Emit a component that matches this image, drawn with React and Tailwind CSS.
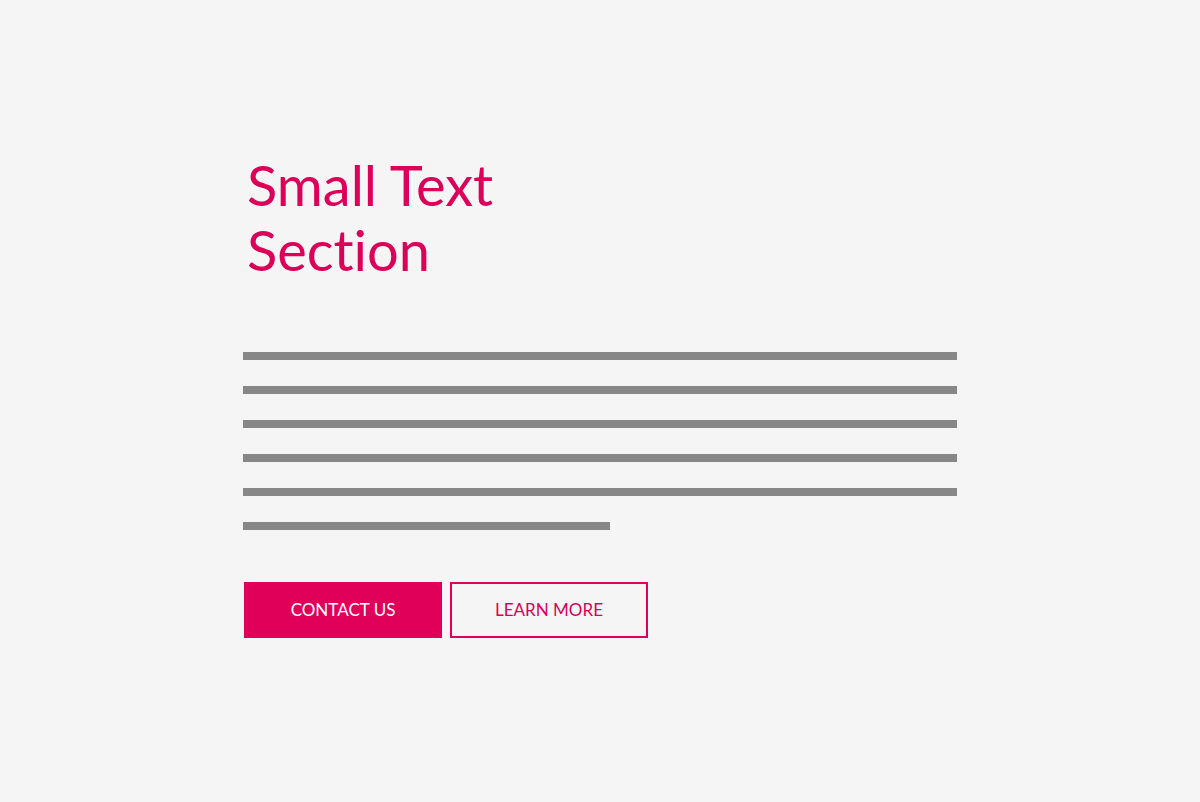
export default function App() {
  const lines = [714, 714, 714, 714, 714, 367];
  return (
    <div className="w-[1200px] h-[802px] bg-[#f5f5f5] overflow-hidden [font-variant-ligatures:none]" style={{ fontFamily: "Lato, 'Noto Sans', sans-serif" }}>
      <div className="flex flex-col pl-[243px] pt-[152px]">
        <h1 className="pl-[4px] text-[56px] leading-[65px] font-normal text-[#dc0058]">
          Small Text
          <br />
          Section
        </h1>
        <div className="mt-[70px] flex flex-col gap-[26px]">
          {lines.map((w, i) => (
            <div key={i} className="h-[8px] bg-[#878787]" style={{ width: w }} />
          ))}
        </div>
        <div className="mt-[52px] ml-[1px] flex gap-[8px]">
          <button className="w-[198px] h-[56px] bg-[#e0005a] text-white text-[17px]">
            CONTACT US
          </button>
          <button className="w-[198px] h-[56px] border-2 border-[#e0005a] text-[#d9005a] text-[17px]">
            LEARN MORE
          </button>
        </div>
      </div>
    </div>
  );
}
